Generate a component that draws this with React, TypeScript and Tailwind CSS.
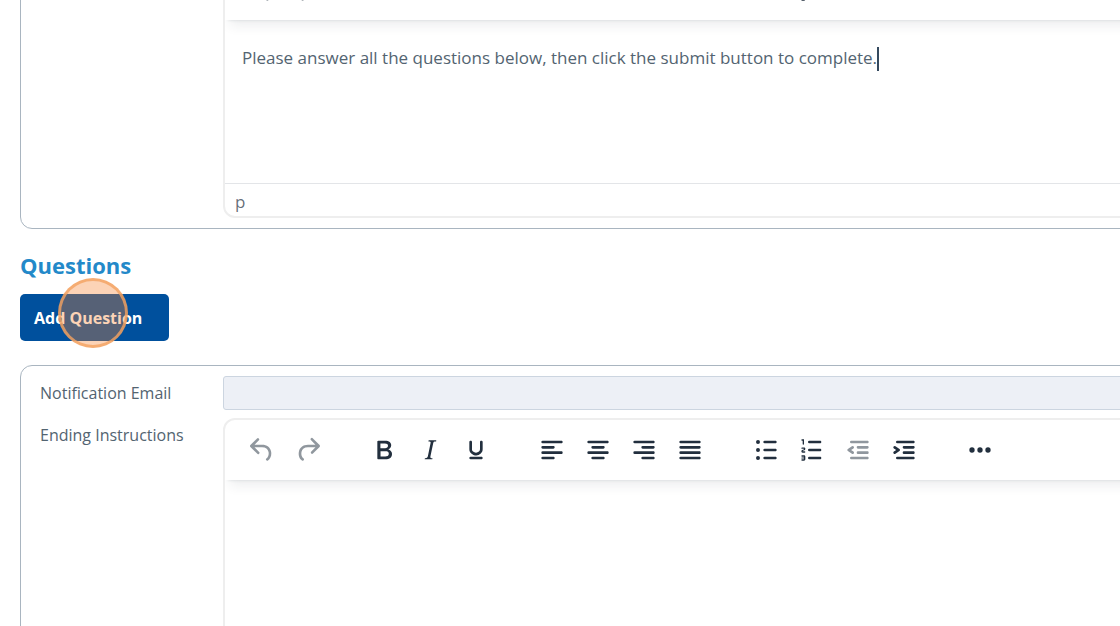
import React from 'react';

type IconName =
  | 'undo'
  | 'redo'
  | 'bold'
  | 'italic'
  | 'underline'
  | 'alignLeft'
  | 'alignCenter'
  | 'alignRight'
  | 'alignJustify'
  | 'bulletList'
  | 'numberList'
  | 'outdent'
  | 'indent'
  | 'more';

const iconPaths: Record<IconName, string> = {
  undo: 'M6.4 8H12c3.7 0 6.2 2 6.8 5.1.6 2.7-.4 5.6-2.3 6.8a1 1 0 0 1-1-1.8c1.1-.6 1.8-2.7 1.4-4.6-.5-2.1-2.1-3.5-4.9-3.5H6.4l3.3 3.3a1 1 0 1 1-1.4 1.4l-5-5a1 1 0 0 1 0-1.4l5-5a1 1 0 0 1 1.4 1.4L6.4 8Z',
  redo: 'M17.6 10H12c-2.8 0-4.4 1.4-4.9 3.5-.4 2 .3 4 1.4 4.6a1 1 0 1 1-1 1.8c-2-1.2-2.9-4.1-2.3-6.8.6-3 3-5.1 6.8-5.1h5.6l-3.3-3.3a1 1 0 1 1 1.4-1.4l5 5a1 1 0 0 1 0 1.4l-5 5a1 1 0 0 1-1.4-1.4l3.3-3.3Z',
  bold: 'M7.8 19c-.3 0-.5 0-.6-.2l-.2-.5V5.7c0-.2 0-.4.2-.5l.6-.2h5c1.5 0 2.7.3 3.5 1 .7.6 1.1 1.4 1.1 2.5a3 3 0 0 1-.6 1.9c-.4.6-1 1-1.6 1.2.4.1.9.3 1.3.6s.8.7 1 1.2c.4.4.5 1 .5 1.6 0 1.3-.4 2.3-1.3 3-.8.7-2.1 1-3.8 1H7.8Zm5-8.3c.6 0 1.2-.1 1.6-.5.4-.3.6-.7.6-1.3 0-1.1-.8-1.7-2.3-1.7H9.3v3.5h3.4Zm.5 6c.7 0 1.3-.1 1.7-.4.4-.4.6-.9.6-1.5s-.2-1-.7-1.4c-.4-.3-1-.4-2-.4H9.4v3.8h4Z',
  italic: 'm16.7 4.7-.1.9h-.3c-.6 0-1 0-1.4.3-.3.3-.4.6-.5 1.1l-2.1 9.8v.6c0 .5.4.8 1.4.8h.2l-.2.8H8l.2-.8h.2c1.1 0 1.8-.5 2-1.5l2-9.8.1-.5c0-.6-.4-.8-1.4-.8h-.3l.2-.9h5.8Z',
  underline: 'M16 5c.6 0 1 .4 1 1v5.5a4 4 0 0 1-.4 1.8l-1 1.4a5.3 5.3 0 0 1-5.5 1 5 5 0 0 1-1.6-1c-.5-.4-.8-.9-1.1-1.4a4 4 0 0 1-.4-1.8V6c0-.6.4-1 1-1s1 .4 1 1v5.5c0 .3 0 .6.2 1l.6.7a3.3 3.3 0 0 0 2.2.8 3.4 3.4 0 0 0 2.2-.8c.3-.2.4-.5.6-.8l.2-.9V6c0-.6.4-1 1-1ZM8 17h8c.6 0 1 .4 1 1s-.4 1-1 1H8a1 1 0 0 1 0-2Z',
  alignLeft: 'M5 5h14c.6 0 1 .4 1 1s-.4 1-1 1H5a1 1 0 1 1 0-2Zm0 4h8c.6 0 1 .4 1 1s-.4 1-1 1H5a1 1 0 1 1 0-2Zm0 8h8c.6 0 1 .4 1 1s-.4 1-1 1H5a1 1 0 0 1 0-2Zm0-4h14c.6 0 1 .4 1 1s-.4 1-1 1H5a1 1 0 0 1 0-2Z',
  alignCenter: 'M5 5h14c.6 0 1 .4 1 1s-.4 1-1 1H5a1 1 0 1 1 0-2Zm3 4h8c.6 0 1 .4 1 1s-.4 1-1 1H8a1 1 0 1 1 0-2Zm0 8h8c.6 0 1 .4 1 1s-.4 1-1 1H8a1 1 0 0 1 0-2Zm-3-4h14c.6 0 1 .4 1 1s-.4 1-1 1H5a1 1 0 0 1 0-2Z',
  alignRight: 'M5 5h14c.6 0 1 .4 1 1s-.4 1-1 1H5a1 1 0 1 1 0-2Zm6 4h8c.6 0 1 .4 1 1s-.4 1-1 1h-8a1 1 0 0 1 0-2Zm0 8h8c.6 0 1 .4 1 1s-.4 1-1 1h-8a1 1 0 0 1 0-2Zm-6-4h14c.6 0 1 .4 1 1s-.4 1-1 1H5a1 1 0 0 1 0-2Z',
  alignJustify: 'M5 5h14c.6 0 1 .4 1 1s-.4 1-1 1H5a1 1 0 1 1 0-2Zm0 4h14c.6 0 1 .4 1 1s-.4 1-1 1H5a1 1 0 1 1 0-2Zm0 4h14c.6 0 1 .4 1 1s-.4 1-1 1H5a1 1 0 0 1 0-2Zm0 4h14c.6 0 1 .4 1 1s-.4 1-1 1H5a1 1 0 0 1 0-2Z',
  bulletList: 'M11 5h8c.6 0 1 .4 1 1s-.4 1-1 1h-8a1 1 0 0 1 0-2Zm0 6h8c.6 0 1 .4 1 1s-.4 1-1 1h-8a1 1 0 0 1 0-2Zm0 6h8c.6 0 1 .4 1 1s-.4 1-1 1h-8a1 1 0 0 1 0-2ZM4.500 6a1.500 1.500 0 1 1 3 0 1.500 1.500 0 0 1-3 0Zm0 6a1.500 1.500 0 1 1 3 0 1.500 1.500 0 0 1-3 0Zm0 6a1.500 1.500 0 1 1 3 0 1.500 1.500 0 0 1-3 0Z',
  numberList: 'M10 17h8c.6 0 1 .4 1 1s-.4 1-1 1h-8a1 1 0 0 1 0-2Zm0-6h8c.6 0 1 .4 1 1s-.4 1-1 1h-8a1 1 0 0 1 0-2Zm0-6h8c.6 0 1 .4 1 1s-.4 1-1 1h-8a1 1 0 1 1 0-2ZM6 4v3.500c0 .3-.2.5-.5.5a.5.5 0 0 1-.5-.5V5h-.5a.5.5 0 0 1 0-1H6Zm-1 8.800.2.2h1.300c.3 0 .5.2.5.5s-.2.5-.5.5H4.900a1 1 0 0 1-.9-1V13c0-.4.3-.8.6-1l1.200-.4.2-.3a.2.2 0 0 0-.2-.2H4.500a.5.5 0 0 1-.5-.5c0-.3.2-.5.5-.5h1.600c.5 0 .9.4.9 1v.1c0 .4-.3.8-.6 1l-1.200.4-.2.3ZM7 17v2c0 .6-.4 1-1 1H4.500a.5.5 0 0 1 0-1h1.200c.2 0 .3-.1.3-.3 0-.2-.1-.3-.3-.3H4.400a.4.4 0 1 1 0-.8h1.300c.2 0 .3-.1.3-.3 0-.2-.1-.3-.3-.3H4.500a.5.5 0 1 1 0-1H6c.6 0 1 .4 1 1Z',
  outdent: 'M7 5h12c.6 0 1 .4 1 1s-.4 1-1 1H7a1 1 0 1 1 0-2Zm5 4h7c.6 0 1 .4 1 1s-.4 1-1 1h-7a1 1 0 0 1 0-2Zm0 4h7c.6 0 1 .4 1 1s-.4 1-1 1h-7a1 1 0 0 1 0-2Zm-5 4h12c.6 0 1 .4 1 1s-.4 1-1 1H7a1 1 0 0 1 0-2Zm1.600-3.800a1 1 0 0 1-1.200 1.600l-3-2a1 1 0 0 1 0-1.600l3-2a1 1 0 0 1 1.200 1.600L6.800 12l1.800 1.200Z',
  indent: 'M7 5h12c.6 0 1 .4 1 1s-.4 1-1 1H7a1 1 0 1 1 0-2Zm5 4h7c.6 0 1 .4 1 1s-.4 1-1 1h-7a1 1 0 0 1 0-2Zm0 4h7c.6 0 1 .4 1 1s-.4 1-1 1h-7a1 1 0 0 1 0-2Zm-5 4h12c.6 0 1 .4 1 1s-.4 1-1 1H7a1 1 0 0 1 0-2Zm-2.600-3.800L6.200 12l-1.800-1.200a1 1 0 0 1 1.200-1.600l3 2a1 1 0 0 1 0 1.600l-3 2a1 1 0 1 1-1.200-1.600Z',
  more: 'M4 12a2 2 0 1 1 4 0 2 2 0 0 1-4 0Zm6 0a2 2 0 1 1 4 0 2 2 0 0 1-4 0Zm6 0a2 2 0 1 1 4 0 2 2 0 0 1-4 0Z',
};

interface ToolItem {
  icon: IconName;
  label: string;
  disabled?: boolean;
}

const toolGroups: ToolItem[][] = [
  [
    { icon: 'undo', label: 'Undo', disabled: true },
    { icon: 'redo', label: 'Redo', disabled: true },
  ],
  [
    { icon: 'bold', label: 'Bold' },
    { icon: 'italic', label: 'Italic' },
    { icon: 'underline', label: 'Underline' },
  ],
  [
    { icon: 'alignLeft', label: 'Align left' },
    { icon: 'alignCenter', label: 'Align center' },
    { icon: 'alignRight', label: 'Align right' },
    { icon: 'alignJustify', label: 'Justify' },
  ],
  [
    { icon: 'bulletList', label: 'Bullet list' },
    { icon: 'numberList', label: 'Numbered list' },
    { icon: 'outdent', label: 'Decrease indent', disabled: true },
    { icon: 'indent', label: 'Increase indent' },
  ],
  [{ icon: 'more', label: 'Reveal or hide additional toolbar items' }],
];

// Toolbar
const Toolbar: React.FC = () => (
  <div
    role="toolbar"
    className="flex h-[60px] items-center gap-[30px] px-3.5 shadow-[0_3px_3px_-3px_rgba(34,47,62,0.15),0_11px_11px_-5px_rgba(34,47,62,0.08)]"
  >
    {toolGroups.map((group, i) => (
      <div key={i} className="flex">
        {group.map(({ icon, label, disabled }) => (
          <button
            key={icon}
            type="button"
            aria-label={label}
            disabled={disabled}
            className="flex h-10 w-[46px] items-center justify-center text-[#222f3e] disabled:text-[#222f3e]/50"
          >
            <svg viewBox="0 0 24 24" className="size-8 fill-current" fillRule="evenodd" aria-hidden="true">
              <path d={iconPaths[icon]} />
            </svg>
          </button>
        ))}
      </div>
    ))}
  </div>
);

interface EditorProps {
  label: string;
  path?: string;
  bodyClassName?: string;
  children?: React.ReactNode;
}

// Rich text editor
const Editor: React.FC<EditorProps> = ({ label, path, bodyClassName = '', children }) => (
  <div className="min-w-0 flex-1 overflow-hidden rounded-xl border-2 border-[#eeeeee] bg-white">
    <Toolbar />
    <div
      role="textbox"
      aria-multiline="true"
      aria-label={label}
      contentEditable
      suppressContentEditableWarning
      className={`px-[17px] py-6 text-[17px] leading-7 outline-none ${bodyClassName}`}
    >
      {children}
    </div>
    {path && (
      <div className="h-[33px] border-t border-[#e3e5e8] px-2.5 text-[17px] leading-9 text-[#222f3e]/70">{path}</div>
    )}
  </div>
);

const Panel: React.FC<{ children: React.ReactNode; className?: string }> = ({ children, className = '' }) => (
  <section className={`-mr-16 flex flex-col gap-2 rounded-xl border border-[#a9b5c0] py-2.5 pl-[19px] pr-5 ${className}`}>
    {children}
  </section>
);

const labelClasses = 'w-[183px] shrink-0 text-[16px] leading-[34px]';

export default function App() {
  return (
    <main className="h-screen overflow-hidden bg-white px-5 font-['Open_Sans',sans-serif] text-[#536471]">
      <Panel className="-mt-[53px]">
        <div className="ml-[183px] flex items-start">
          <Editor label="Instructions" path="p" bodyClassName="h-[163px]">
            <p>
              Please answer all the questions below, then click the submit button to complete.
              <span className="inline-block h-6 w-0.5 bg-[#34495e] align-middle" />
            </p>
          </Editor>
        </div>
      </Panel>

      <h2 className="mt-5 text-[22px] font-bold leading-8 text-[#2389c9]">Questions</h2>
      <div className="relative mt-[13px] w-fit">
        <button type="button" className="h-[47px] w-[149px] rounded-[5px] bg-[#00509d] px-3.5 text-left text-[16px] font-bold text-white">
          Add Question
        </button>
        {/* Click highlight */}
        <span className="pointer-events-none absolute -top-4 left-[38px] size-[70px] rounded-full border-3 border-[#f4a261]/80 bg-[#f6822d]/35" />
      </div>

      <Panel className="mt-6">
        <div className="flex items-start">
          <label htmlFor="notification-email" className={labelClasses}>Notification Email</label>
          <input
            id="notification-email"
            type="email"
            className="h-[34px] min-w-0 flex-1 rounded-[3px] border border-[#ccd5e0] bg-[#edf0f6] px-3 outline-none"
          />
        </div>
        <div className="flex items-start">
          <span className={labelClasses}>Ending Instructions</span>
          <Editor label="Ending Instructions" bodyClassName="h-[200px]" />
        </div>
      </Panel>
    </main>
  );
}
